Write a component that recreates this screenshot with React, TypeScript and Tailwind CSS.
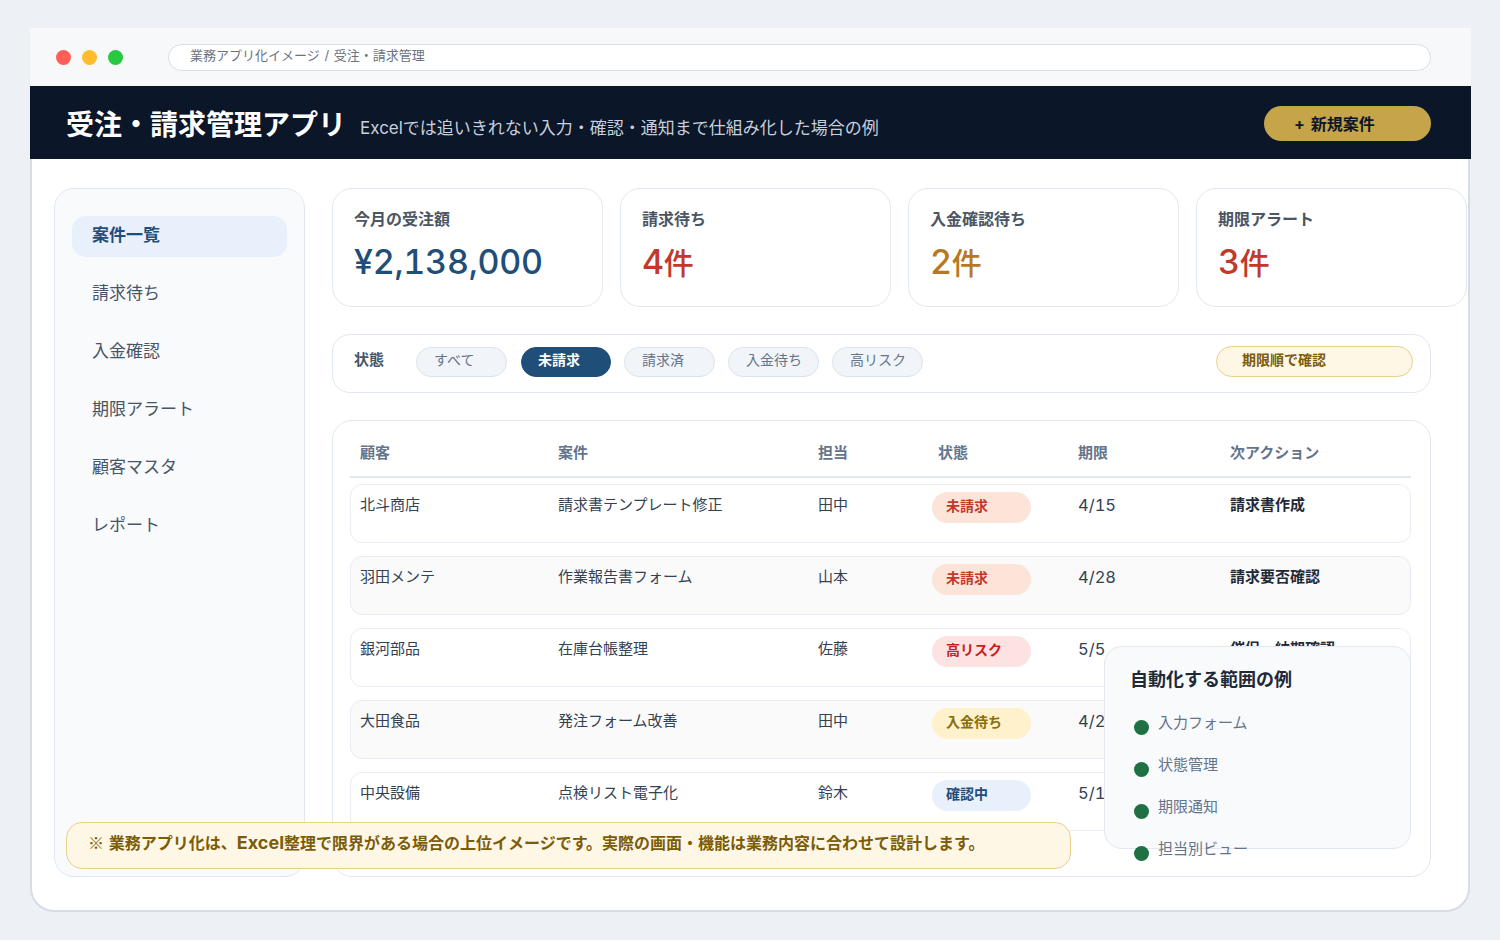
import React from 'react';

const navItems = ['請求待ち', '入金確認', '期限アラート', '顧客マスタ', 'レポート'];

const stats = [
  { label: '今月の受注額', value: '¥2,138,000', unit: '', color: 'text-[#1f4e79]' },
  { label: '請求待ち', value: '4', unit: '件', color: 'text-[#c0392b]' },
  { label: '入金確認待ち', value: '2', unit: '件', color: 'text-[#b7791f]' },
  { label: '期限アラート', value: '3', unit: '件', color: 'text-[#c0392b]' },
];

const chips = ['すべて', '未請求', '請求済', '入金待ち', '高リスク'];

const rows = [
  { client: '北斗商店', job: '請求書テンプレート修正', owner: '田中', status: '未請求', badge: 'bg-[#fde4d8] text-[#c0392b]', due: '4/15', next: '請求書作成' },
  { client: '羽田メンテ', job: '作業報告書フォーム', owner: '山本', status: '未請求', badge: 'bg-[#fde4d8] text-[#c0392b]', due: '4/28', next: '請求要否確認' },
  { client: '銀河部品', job: '在庫台帳整理', owner: '佐藤', status: '高リスク', badge: 'bg-[#fde2e2] text-[#c81e1e]', due: '5/5', next: '催促・納期確認' },
  { client: '大田食品', job: '発注フォーム改善', owner: '田中', status: '入金待ち', badge: 'bg-[#fff1cc] text-[#8a6d0b]', due: '4/26', next: '入金確認' },
  { client: '中央設備', job: '点検リスト電子化', owner: '鈴木', status: '確認中', badge: 'bg-[#e8f0fc] text-[#1f4e79]', due: '5/10', next: '内容確認' },
];

const scopes = ['入力フォーム', '状態管理', '期限通知', '担当別ビュー'];

const cols = 'grid grid-cols-[198px_260px_120px_140px_152px_1fr]';

export default function App() {
  return (
    <div className="w-[1500px] h-[940px] overflow-hidden bg-[#edf0f5] pt-[28px] pl-[30px] font-['Inter','Noto_Sans_CJK_JP',sans-serif]">
      {/* browser bar */}
      <div className="w-[1441px] h-[58px] bg-[#f6f8fa] flex items-start pt-[16px] pl-[26px] pr-[40px]">
        <div className="flex gap-[11px] mt-[6px]">
          <span className="w-[15px] h-[15px] rounded-full bg-[#ff5f57]" />
          <span className="w-[15px] h-[15px] rounded-full bg-[#febc2e]" />
          <span className="w-[15px] h-[15px] rounded-full bg-[#28c840]" />
        </div>
        <div className="ml-[45px] flex-1 h-[27px] rounded-full border border-[#d8dee8] bg-white pl-[21px] text-[13px] leading-[20px] text-[#6b7280] [word-spacing:1px]">
          業務アプリ化イメージ / 受注・請求管理
        </div>
      </div>

      {/* app header */}
      <div className="w-[1441px] h-[73px] bg-[#0b1628] flex items-center pl-[36px] pr-[40px]">
        <h1 className="text-[28px] font-bold text-white leading-[38px] mt-[4px]">受注・請求管理アプリ</h1>
        <p className="ml-[14px] mt-[12px] text-[17px] text-[#c7d0dc]">Excelでは追いきれない入力・確認・通知まで仕組み化した場合の例</p>
        <button className="ml-auto mt-[2px] w-[167px] h-[35px] rounded-full bg-[#c6a44a] pl-[30px] text-left text-[16px] font-bold text-[#0b1628] leading-[26px] [word-spacing:2px]">
          + 新規案件
        </button>
      </div>

      {/* body */}
      <div className="relative w-[1440px] h-[753px] bg-white border-2 border-t-0 border-[#d5dde7] rounded-b-[24px] flex pt-[29px] pl-[22px] gap-[27px]">
        <aside className="w-[251px] h-[689px] shrink-0 rounded-[20px] border border-[#e2e8f0] bg-[#f8fafc] pt-[27px] px-[17px]">
          <div className="h-[41px] rounded-[14px] bg-[#e8f0fc] pl-[20px] text-[17px] font-bold leading-[38px] text-[#1f4e79]">案件一覧</div>
          <div className="mt-[7px] flex flex-col">
            {navItems.map((item) => (
              <div key={item} className="h-[58px] pl-[20px] text-[17px] leading-[58px] text-[#475569]">{item}</div>
            ))}
          </div>
        </aside>

        <main className="w-[1099px] shrink-0">
          <div className="grid grid-cols-[repeat(4,271px)] gap-[17px]">
            {stats.map((s) => (
              <div key={s.label} className="h-[119px] rounded-[20px] border border-[#e2e8f0] bg-white pt-[18px] pl-[21px]">
                <div className="text-[16px] font-semibold leading-[24px] text-[#4b5563]">{s.label}</div>
                <div className={`mt-[7px] text-[34px] font-medium leading-[48px] tabular-nums tracking-[-0.25px] ${s.color}`}>
                  {s.value}
                  {s.unit && <span className="text-[30px] font-medium">{s.unit}</span>}
                </div>
              </div>
            ))}
          </div>

          <div className="mt-[27px] h-[59px] rounded-[18px] border border-[#e2e8f0] bg-white flex items-center pl-[21px] pr-[17px]">
            <span className="mb-[6px] w-[62px] text-[15px] font-bold text-[#475569]">状態</span>
            <div className="flex gap-[13px] mb-[4px]">
              {chips.map((c) => (
                <span
                  key={c}
                  className={
                    c === '未請求'
                      ? 'ml-[1px] w-[90px] h-[30px] rounded-full border border-[#1f4e79] bg-[#1f4e79] pl-[16px] text-[14px] font-bold leading-[24px] text-white'
                      : 'w-[91px] h-[30px] rounded-full border border-[#dbe3ee] bg-[#f1f5f9] pl-[17px] text-[14px] leading-[24px] text-[#64748b]'
                  }
                >
                  {c}
                </span>
              ))}
            </div>
            <span className="ml-auto mb-[4px] w-[197px] h-[31px] rounded-full border border-[#e6d08a] bg-[#fff7e6] pl-[25px] text-[14px] font-bold leading-[25px] text-[#7a5c0a]">
              期限順で確認
            </span>
          </div>

          <div className="mt-[27px] h-[457px] rounded-[20px] border border-[#e2e8f0] bg-white pt-[15px] pl-[17px] pr-[19px]">
            <div className={`${cols} h-[42px] border-b-2 border-[#e2e8f0] pl-[10px] text-[15px] font-bold leading-[34px] text-[#64748b]`}>
              <span>顧客</span>
              <span>案件</span>
              <span>担当</span>
              <span>状態</span>
              <span>期限</span>
              <span>次アクション</span>
            </div>
            <div className="mt-[6px] flex flex-col gap-[13px]">
              {rows.map((r, i) => (
                <div
                  key={r.client}
                  className={`${cols} h-[59px] rounded-[12px] border border-[#e8edf3] pl-[9px] pt-[8px] text-[15px] leading-[24px] text-[#334155] ${i % 2 === 1 ? 'bg-[#fafafa]' : 'bg-white'}`}
                >
                  <span>{r.client}</span>
                  <span>{r.job}</span>
                  <span>{r.owner}</span>
                  <span>
                    <span className={`-ml-[6px] -mt-[1px] block w-[99px] h-[31px] rounded-full pl-[14px] text-[14px] font-bold leading-[28px] ${r.badge}`}>{r.status}</span>
                  </span>
                  <span className="text-[16.5px] tabular-nums">{r.due}</span>
                  <span className="font-bold text-[#1f2937]">{r.next}</span>
                </div>
              ))}
            </div>
          </div>
        </main>

        {/* scope popover */}
        <div className="absolute left-[1072px] top-[487px] w-[307px] h-[203px] rounded-[18px] border border-[#e2e8f0] bg-[#f8fafc] pt-[20px] pl-[25px]">
          <h2 className="text-[18px] font-bold leading-[26px] text-[#1f2937]">自動化する範囲の例</h2>
          <ul className="mt-[17px] flex flex-col gap-[18px]">
            {scopes.map((s) => (
              <li key={s} className="h-[24px] flex items-start text-[15px] leading-[25px] text-[#64748b]">
                <span className="ml-[4px] mt-[10px] w-[15px] h-[15px] rounded-full bg-[#1f7042]" />
                <span className="ml-[9px]">{s}</span>
              </li>
            ))}
          </ul>
        </div>

        {/* note */}
        <div className="absolute left-[34px] top-[663px] w-[1005px] h-[47px] rounded-[16px] border border-[#e6d08a] bg-[#fff7e6] pl-[21px] text-[16px] font-bold leading-[39px] text-[#7a5c0a] [word-spacing:1px]">
          <span className="font-['Noto_Sans_CJK_JP']">※</span> 業務アプリ化は、<span className="text-[18px]">Excel</span>整理で限界がある場合の上位イメージです。実際の画面・機能は業務内容に合わせて設計します。
        </div>
      </div>
    </div>
  );
}
